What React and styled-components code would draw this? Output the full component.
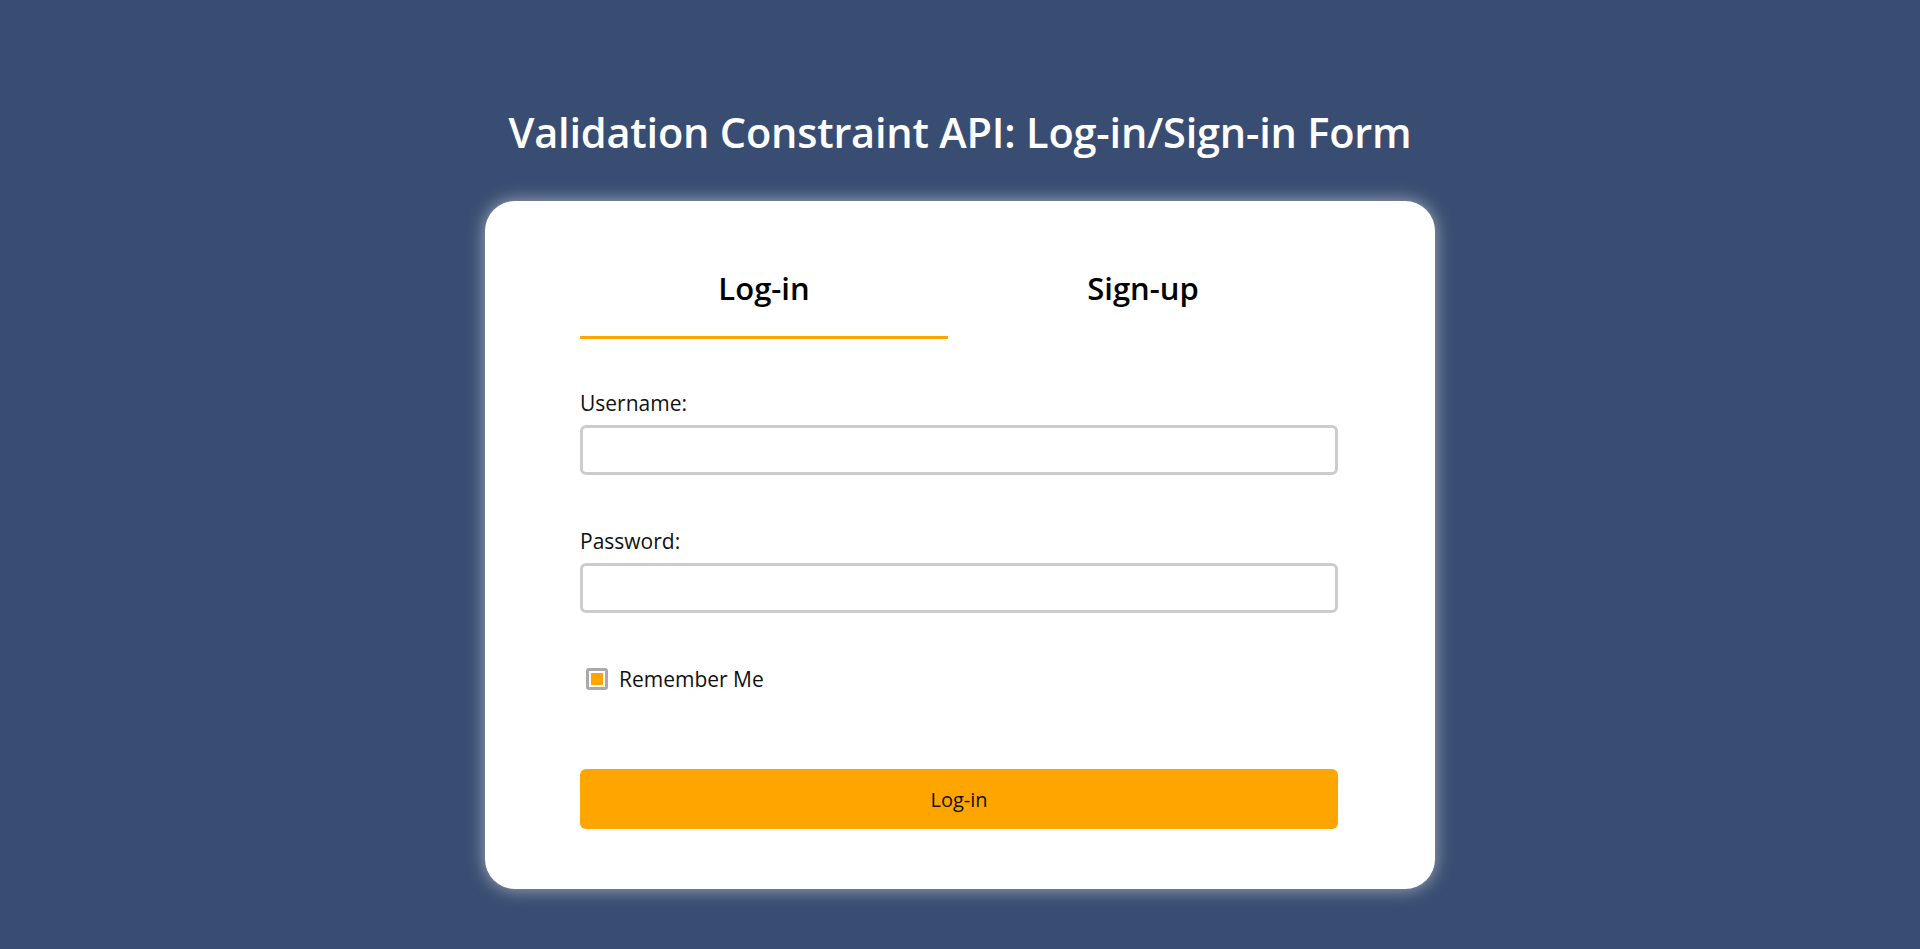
import React, { useState } from "react";
import styled, { createGlobalStyle } from "styled-components";

const GlobalStyle = createGlobalStyle`
  * {
    box-sizing: border-box;
  }
  body {
    margin: 0;
    background: #384d71;
    font-family: "Open Sans", "Noto Sans", sans-serif;
  }
`;

const Page = styled.main`
  min-height: 100vh;
  display: flex;
  flex-direction: column;
  align-items: center;
  padding-top: 104px;
`;

const Heading = styled.h1`
  margin: 0 0 41px;
  color: #fff;
  font-size: 41.5px;
  font-weight: 600;
  line-height: 56px;
  letter-spacing: -0.2px;
`;

const Card = styled.section`
  width: 950px;
  background: #fff;
  border-radius: 30px;
  padding: 64px 97px 60px 95px;
  box-shadow: 0 0 18px rgba(255, 255, 255, 0.55);
`;

const Tabs = styled.div`
  display: flex;
  gap: 11px;
  margin-bottom: 51px;
`;

const Tab = styled.button`
  width: 368px;
  padding: 0 0 25px;
  background: none;
  border: none;
  border-bottom: 3px solid ${(p) => (p.$active ? "#ffa500" : "transparent")};
  font-family: inherit;
  font-size: 31px;
  font-weight: 600;
  line-height: 46px;
  color: #000;
  cursor: pointer;
`;

const Field = styled.div`
  display: flex;
  flex-direction: column;
  margin-bottom: 53px;
`;

const Label = styled.label`
  font-size: 21px;
  line-height: 26px;
  color: #111;
  margin-bottom: 9px;
`;

const Input = styled.input`
  height: 50px;
  border: 3px solid #ccc;
  border-radius: 6px;
  padding: 0 12px;
  font-family: inherit;
  font-size: 18px;
  outline: none;
`;

const CheckRow = styled.label`
  display: flex;
  align-items: center;
  gap: 11px;
  margin-left: 6px;
  font-size: 21px;
  line-height: 26px;
  color: #111;
  cursor: pointer;
`;

const Box = styled.span`
  width: 22px;
  height: 22px;
  border: 3px solid #aaa;
  border-radius: 3px;
  padding: 2px;
  display: flex;

  &::after {
    content: "";
    flex: 1;
    background: ${(p) => (p.$checked ? "#ffa500" : "transparent")};
  }
`;

const HiddenCheck = styled.input`
  display: none;
`;

const Submit = styled.button`
  width: 100%;
  height: 60px;
  margin-top: 77px;
  background: #ffa500;
  border: none;
  border-radius: 6px;
  font-family: inherit;
  font-size: 20px;
  color: #111;
  cursor: pointer;
`;

export default function App() {
  const [tab, setTab] = useState("login");
  const [remember, setRemember] = useState(true);

  return (
    <>
      <GlobalStyle />
      <Page>
        <Heading>Validation Constraint API: Log-in/Sign-in Form</Heading>
        <Card>
          <Tabs>
            <Tab $active={tab === "login"} onClick={() => setTab("login")}>
              Log-in
            </Tab>
            <Tab $active={tab === "signup"} onClick={() => setTab("signup")}>
              Sign-up
            </Tab>
          </Tabs>
          <form onSubmit={(e) => e.preventDefault()}>
            <Field>
              <Label htmlFor="username">Username:</Label>
              <Input id="username" type="text" />
            </Field>
            <Field>
              <Label htmlFor="password">Password:</Label>
              <Input id="password" type="password" />
            </Field>
            <CheckRow>
              <HiddenCheck
                type="checkbox"
                checked={remember}
                onChange={() => setRemember(!remember)}
              />
              <Box $checked={remember} />
              Remember Me
            </CheckRow>
            <Submit type="submit">Log-in</Submit>
          </form>
        </Card>
      </Page>
    </>
  );
}
